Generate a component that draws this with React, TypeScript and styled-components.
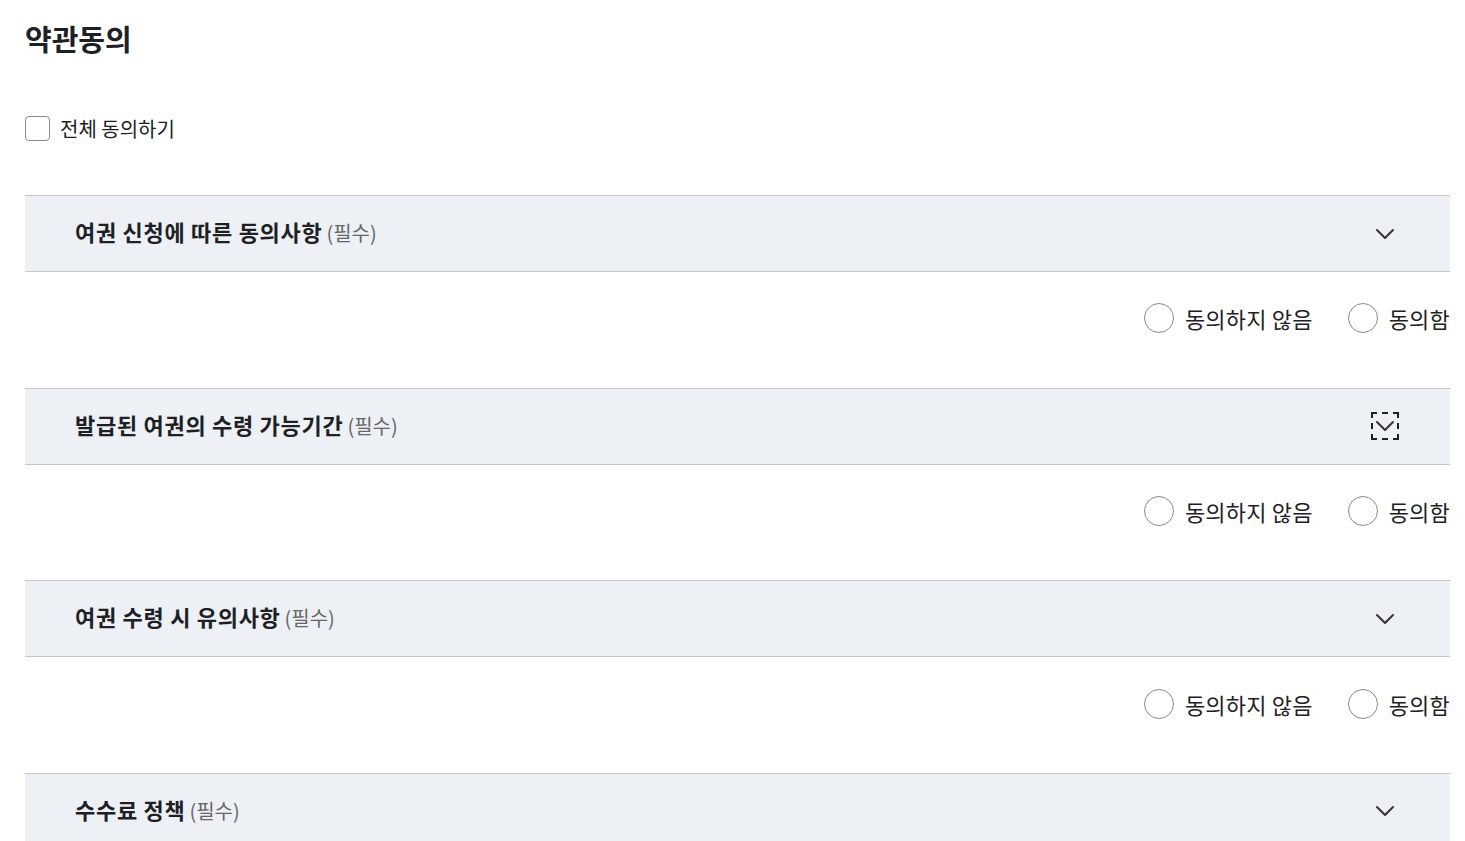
import React from "react";
import styled, { createGlobalStyle } from "styled-components";

const Global = createGlobalStyle`
  html, body { margin: 0; padding: 0; background: #fff; }
  body { font-family: "Noto Sans CJK KR", "Noto Sans", sans-serif; color: #1e2124; }
  * { box-sizing: border-box; }
`;

const Page = styled.div`
  padding: 14px 15px 0 25px;
  height: 841px;
  overflow: hidden;
`;

const Title = styled.h2`
  margin: 0;
  font-size: 29px;
  font-weight: 700;
  line-height: 48px;
  color: #1e2124;
`;

const AllAgree = styled.label`
  display: flex;
  align-items: center;
  gap: 10px;
  margin-top: 52px;
  font-size: 20px;
  color: #1e2124;
  height: 28px;
`;

const CheckBox = styled.span`
  width: 25px;
  height: 25px;
  border: 1px solid #8a8a8a;
  border-radius: 4px;
  background: #fff;
`;

const List = styled.div`
  margin-top: 53px;
  display: flex;
  flex-direction: column;
`;

const Header = styled.div`
  display: flex;
  align-items: center;
  justify-content: space-between;
  height: 77px;
  padding: 0 51px 5px 50px;
  background: #edf0f4;
  border-top: 1px solid #c6c6c6;
  border-bottom: 1px solid #c6c6c6;
`;

const HeaderTitle = styled.div`
  font-size: 22px;
  font-weight: 700;
  color: #1e2124;
  letter-spacing: 0.7px;
`;

const Required = styled.span`
  font-size: 20px;
  font-weight: 400;
  letter-spacing: 0;
  color: #666;
  margin-left: 4px;
`;

const Toggle = styled.span<{ $focused?: boolean }>`
  width: 28px;
  height: 28px;
  margin-top: 5px;
  display: flex;
  align-items: center;
  justify-content: center;
  border: 2px dashed ${(p) => (p.$focused ? "#1e2124" : "transparent")};
  color: #333;
`;

const Answers = styled.div`
  display: flex;
  justify-content: flex-end;
  align-items: center;
  gap: 35px;
  height: 115.67px;
  padding-bottom: 23px;
`;

const RadioLabel = styled.label`
  display: flex;
  align-items: center;
  gap: 11px;
  font-size: 22px;
  letter-spacing: 0.2px;
  color: #1e2124;
`;

const RadioCircle = styled.span`
  width: 30px;
  height: 30px;
  border: 1px solid #8a8a8a;
  border-radius: 50%;
  background: #fff;
`;

const Chevron = () => (
  <svg width="20" height="12" viewBox="0 0 20 12" fill="none">
    <path d="M2 2l8 8 8-8" stroke="#333" strokeWidth="2" strokeLinecap="round" strokeLinejoin="round" />
  </svg>
);

const items = [
  { title: "여권 신청에 따른 동의사항", focused: false },
  { title: "발급된 여권의 수령 가능기간", focused: true },
  { title: "여권 수령 시 유의사항", focused: false },
  { title: "수수료 정책", focused: false },
];

export default function App() {
  return (
    <Page>
      <Global />
      <Title>약관동의</Title>
      <AllAgree>
        <CheckBox />
        전체 동의하기
      </AllAgree>
      <List>
        {items.map((it, i) => (
          <React.Fragment key={it.title}>
            <Header>
              <HeaderTitle>
                {it.title}
                <Required>(필수)</Required>
              </HeaderTitle>
              <Toggle $focused={it.focused}>
                <Chevron />
              </Toggle>
            </Header>
            {i < items.length - 1 && (
              <Answers>
                <RadioLabel>
                  <RadioCircle />
                  동의하지 않음
                </RadioLabel>
                <RadioLabel>
                  <RadioCircle />
                  동의함
                </RadioLabel>
              </Answers>
            )}
          </React.Fragment>
        ))}
      </List>
    </Page>
  );
}
